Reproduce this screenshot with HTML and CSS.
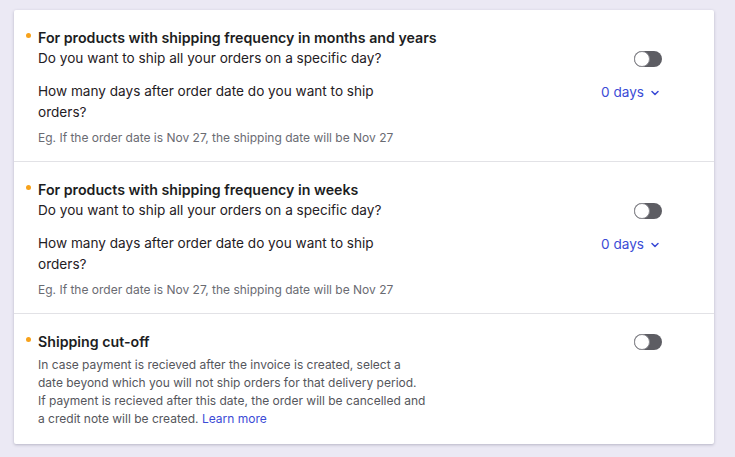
FILE: index.html
```html
<!DOCTYPE html>
<html>
<head>
<meta charset="utf-8">
<link rel="stylesheet" href="styles.css">
</head>
<body>
<div class="card">
  <section class="sec">
    <div class="title"><span class="dot"></span>For products with shipping frequency in months and years</div>
    <div class="row">
      <div class="q">Do you want to ship all your orders on a specific day?</div>
      <span class="toggle"><span class="knob"></span></span>
    </div>
    <div class="row row2">
      <div class="q q2">How many days after order date do you want to ship orders?</div>
      <div class="sel">0 days <svg class="chev" width="8" height="6" viewBox="0 0 8 6"><path d="M1 1.5 L4 4.5 L7 1.5" fill="none" stroke="#3b4bd6" stroke-width="1.5" stroke-linecap="round" stroke-linejoin="round"/></svg></div>
    </div>
    <div class="hint">Eg. If the order date is Nov 27, the shipping date will be Nov 27</div>
  </section>
  <section class="sec">
    <div class="title"><span class="dot"></span>For products with shipping frequency in weeks</div>
    <div class="row">
      <div class="q">Do you want to ship all your orders on a specific day?</div>
      <span class="toggle"><span class="knob"></span></span>
    </div>
    <div class="row row2">
      <div class="q q2">How many days after order date do you want to ship orders?</div>
      <div class="sel">0 days <svg class="chev" width="8" height="6" viewBox="0 0 8 6"><path d="M1 1.5 L4 4.5 L7 1.5" fill="none" stroke="#3b4bd6" stroke-width="1.5" stroke-linecap="round" stroke-linejoin="round"/></svg></div>
    </div>
    <div class="hint">Eg. If the order date is Nov 27, the shipping date will be Nov 27</div>
  </section>
  <section class="sec last">
    <div class="row top">
      <div class="title"><span class="dot"></span>Shipping cut-off</div>
      <span class="toggle"><span class="knob"></span></span>
    </div>
    <p class="desc"><span class="sentence">In case payment is recieved after the invoice is created, select a date beyond which you will not ship orders for that delivery period.</span> <span class="sentence">If payment is recieved after this date, the order will be cancelled and a credit note will be created. <a class="link">Learn more</a></span></p>
  </section>
</div>
</body>
</html>
```
FILE: styles.css
```css
html, body {
  margin: 0;
  padding: 0;
  background: #ebe9f4;
}
body {
  padding: 10px 21px 14px 14px;
  font-family: Inter, "Noto Sans", sans-serif;
  color: #1f2024;
}
.card {
  background: #fff;
  box-shadow: 0 1px 3px rgba(60, 60, 90, 0.3);
  border-radius: 2px;
}
.sec {
  padding: 18px 52px 14px 24px;
  border-bottom: 1px solid #e2e2e6;
}
.sec.last {
  border-bottom: none;
  padding-bottom: 16px;
}
.title {
  font-size: 14.2px;
  font-weight: 600;
  line-height: 20px;
  color: #1c1d22;
  display: flex;
  align-items: center;
}
.dot {
  width: 5px;
  height: 5px;
  border-radius: 50%;
  background: #f7a21b;
  margin-left: -12px;
  margin-right: 7px;
  margin-top: -6px;
  flex: none;
}
.row {
  display: flex;
  justify-content: space-between;
  align-items: center;
}
.q {
  font-size: 13.6px;
  line-height: 21px;
  color: #1f2024;
}
.q2 { max-width: 350px; }
.row2 {
  align-items: flex-start;
  margin-top: 12px;
}
.toggle {
  width: 28px;
  height: 16px;
  border-radius: 8px;
  background: #5d5d63;
  position: relative;
  flex: none;
}
.knob {
  position: absolute;
  left: 0;
  top: 0;
  width: 14px;
  height: 14px;
  border-radius: 50%;
  background: #fff;
  border: 1px solid #8a8a90;
}
.sel {
  font-size: 13.6px;
  line-height: 21px;
  color: #3b4bd6;
  margin-right: 3px;
  margin-top: 1px;
  display: flex;
  align-items: center;
  gap: 7px;
}
.chev { margin-top: 1px; }
.hint {
  font-size: 12px;
  line-height: 18px;
  color: #6a6b72;
  margin-top: 6px;
}
.desc {
  margin: 4px 0 0;
  max-width: 390px;
  font-size: 12px;
  line-height: 18px;
  color: #55565c;
}
.sentence { display: block; }
.link { color: #3b4bd6; }
```
